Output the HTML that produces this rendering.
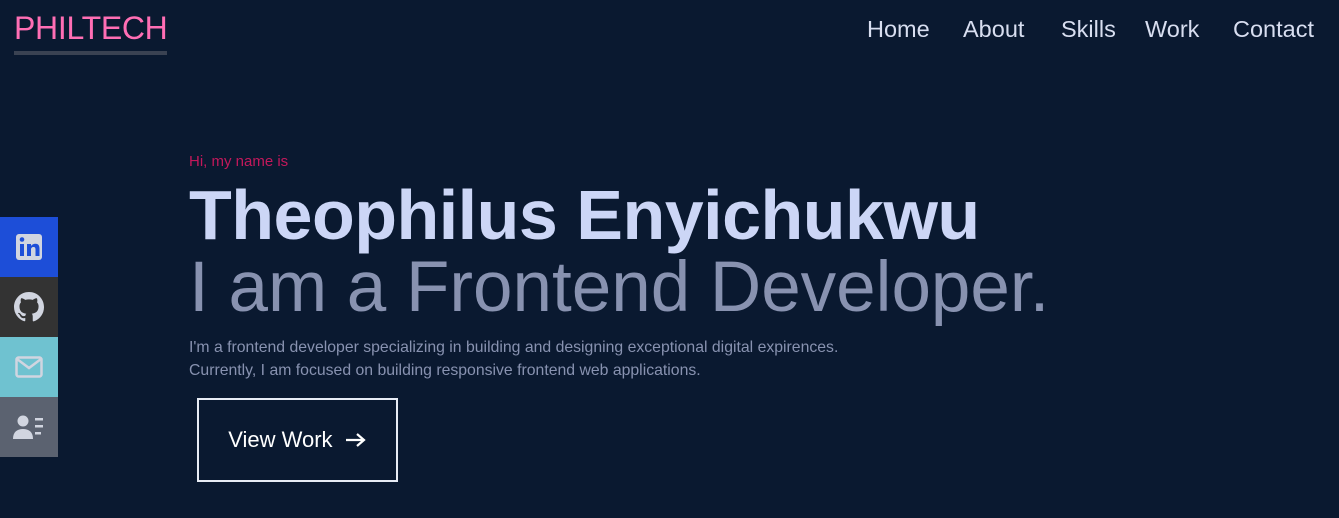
<!DOCTYPE html>
<html><head><style>
body{margin:0;width:1339px;height:518px;background:#0a1930;font-family:"Liberation Sans",sans-serif;overflow:hidden;position:relative}
.logo{position:absolute;left:14px;top:10px;font-size:32px;color:#ff6eb4;letter-spacing:-0.3px}
.logo:after{content:"";position:absolute;left:0;right:0;top:41px;height:4px;background:#3a4252}
.nav{position:absolute;top:16px;font-size:23.5px;color:#d8def0}
.side div{position:absolute;left:0;width:58px;height:60px;display:flex;align-items:center;justify-content:center}
.t{position:absolute;left:189px;white-space:nowrap}
</style></head><body>
<div class="logo">PHILTECH</div>
<div class="nav" style="left:867px">Home</div>
<div class="nav" style="left:963px">About</div>
<div class="nav" style="left:1061px">Skills</div>
<div class="nav" style="left:1145px">Work</div>
<div class="nav" style="left:1233px">Contact</div>
<div class="side">
<div style="top:217px;background:#1d4ed8"><svg width="28" height="28" viewBox="0 0 28 28"><rect x="1" y="1" width="26" height="26" rx="3" fill="#d1d5e0"/><rect x="5" y="11" width="4" height="12" fill="#1d4ed8"/><circle cx="7" cy="6.5" r="2.3" fill="#1d4ed8"/><path d="M12 11h4v2c1-1.5 2.5-2.3 4.5-2.3 3 0 4 2 4 5V23h-4v-6.5c0-1.5-.5-2.5-2-2.5s-2.5 1-2.5 2.5V23h-4z" fill="#1d4ed8"/></svg></div>
<div style="top:277px;background:#333333"><svg width="30" height="30" viewBox="0 0 16 16"><path fill="#d1d5e0" d="M8 0C3.58 0 0 3.58 0 8c0 3.54 2.29 6.530 5.47 7.59.4.07.55-.17.55-.38v-1.33c-2.23.48-2.7-1.07-2.7-1.070-.36-.92-.89-1.17-.89-1.17-.73-.5.06-.49.06-.49.8.06 1.23.83 1.23.83.72 1.22 1.87.87 2.33.67.07-.52.28-.87.5-1.07-1.78-.2-3.64-.89-3.64-3.95 0-.87.31-1.59.82-2.15-.08-.2-.36-1.020.08-2.12 0 0 .67-.21 2.2.82a7.6 7.6 0 0 1 4 0c1.53-1.04 2.2-.82 2.2-.82.44 1.1.16 1.92.08 2.12.51.56.82 1.27.82 2.15 0 3.07-1.87 3.75-3.65 3.95.29.25.54.73.54 1.48v2.2c0 .21.15.46.55.38A8.01 8.01 0 0 0 16 8c0-4.42-3.58-8-8-8z"/></svg></div>
<div style="top:337px;background:#6fc2d0"><svg width="28" height="22" viewBox="0 0 28 22"><rect x="1.5" y="1.5" width="25" height="19" rx="2" fill="none" stroke="#d1d5e0" stroke-width="2.5"/><path d="M2 3l12 9 12-9" fill="none" stroke="#d1d5e0" stroke-width="2.5"/></svg></div>
<div style="top:397px;background:#5b6270"><svg width="32" height="26" viewBox="0 0 32 26"><circle cx="10" cy="7" r="5.5" fill="#d1d5e0"/><path d="M0 25c0-7 4-10 10-10s10 3 10 10z" fill="#d1d5e0"/><rect x="22" y="4" width="8" height="2.5" fill="#d1d5e0"/><rect x="22" y="11" width="8" height="2.5" fill="#d1d5e0"/><rect x="22" y="18" width="6" height="2.5" fill="#d1d5e0"/></svg></div>
</div>
<div class="t" style="top:153px;font-size:15px;color:#c2185b">Hi, my name is</div>
<div class="t" style="top:175px;font-size:70px;font-weight:bold;color:#ccd6f6;letter-spacing:-0.5px">Theophilus Enyichukwu</div>
<div class="t" style="top:247px;font-size:71px;color:#8892b0">I am a Frontend Developer.</div>
<div class="t" style="top:336px;font-size:15.8px;line-height:23px;color:#8892b0">I'm a frontend developer specializing in building and designing exceptional digital expirences.<br>Currently, I am focused on building responsive frontend web applications.</div>
<div style="position:absolute;left:197px;top:398px;width:197px;height:80px;border:2px solid #e8ecf5;color:#fff;font-size:22px;display:flex;align-items:center;justify-content:center">View Work&nbsp;&nbsp;<svg width="22" height="16" viewBox="0 0 22 16"><path d="M1 8h18M12 2l7 6-7 6" fill="none" stroke="#fff" stroke-width="2.2"/></svg></div>
</body></html>
